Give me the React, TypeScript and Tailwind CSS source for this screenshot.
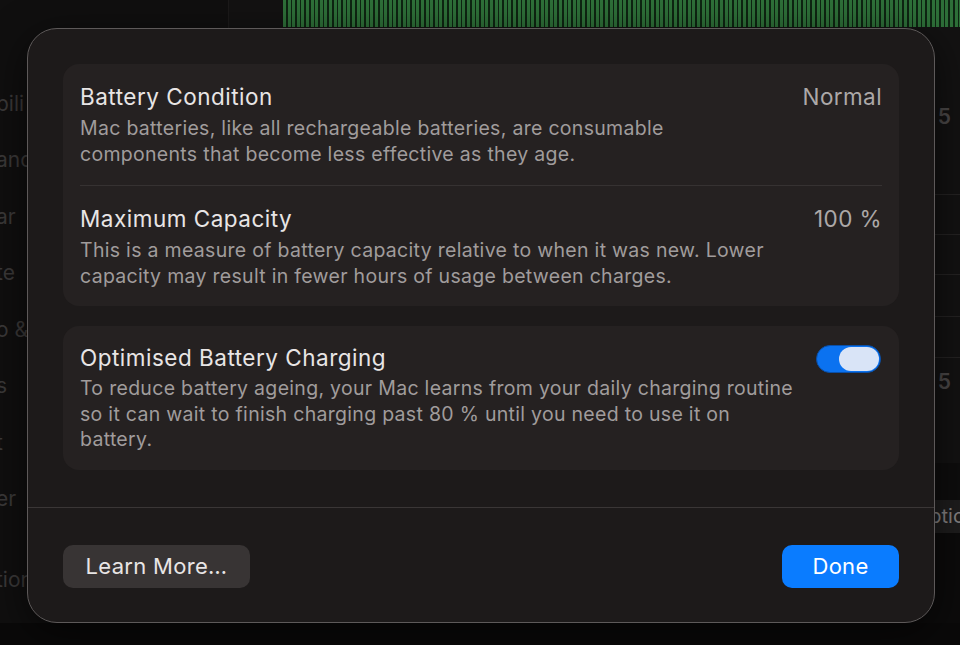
const sidebarItems = ["bili", "and", "ar", "te", "o &", "s", "t", "er", "tion"];

const Toggle = ({ on }: { on: boolean }) => (
  <div
    className={
      on
        ? "flex h-[28px] w-[65px] shrink-0 items-center justify-end rounded-full border border-[#0a4fa8] bg-[#0b72f0] px-[1px]"
        : "flex h-[28px] w-[65px] shrink-0 items-center justify-start rounded-full border border-[#3a3636] bg-[#302c2c] px-[1px]"
    }
  >
    <div className="h-[24px] w-[40px] rounded-full bg-[#d9e4f7]" />
  </div>
);

const Row = ({
  title,
  body,
  value,
  className,
}: {
  title: string;
  body: string[];
  value?: string;
  className?: string;
}) => (
  <div className={"flex items-start justify-between gap-4 " + (className ?? "")}>
    <div className="flex flex-col">
      <div className="text-[22.5px] leading-[26px] tracking-[0.5px] text-[#e8e5e5]">{title}</div>
      <div className="mt-[5px] text-[19.5px] leading-[26px] tracking-[0.3px] text-[#a09c9c]">
        {body.map((line) => (
          <div key={line} className="whitespace-nowrap">
            {line}
          </div>
        ))}
      </div>
    </div>
    {value && (
      <div className="text-[22.5px] leading-[26px] tracking-[0.4px] text-[#aca8a8]">{value}</div>
    )}
  </div>
);

export default function App() {
  return (
    <div className="relative h-[645px] w-[960px] overflow-hidden bg-[#0a0909] font-['Inter','Liberation_Sans',sans-serif]">
      {/* window behind the sheet */}
      <div className="flex h-[623px]">
        <aside className="flex w-[229px] shrink-0 flex-col border-r border-[#1c1a1a] bg-[#100f0f] pt-[91px]">
          {sidebarItems.map((item, i) => (
            <div
              key={item}
              className={
                "-ml-[4px] h-[58px] whitespace-nowrap text-[21px] leading-[26px] text-[#3b3939] " +
                (i === 7 ? "mb-[24px]" : "")
              }
            >
              {item}
            </div>
          ))}
        </aside>
        <main className="flex min-w-0 flex-1 flex-col">
          <div className="flex h-[27px]">
            <div className="w-[54px] bg-[#131212]" />
            <div className="flex-1 bg-[repeating-linear-gradient(90deg,#2e7039_0px,#2e7039_3px,#0e2412_3px,#0e2412_4.6px)]" />
          </div>
          <div className="flex flex-1 flex-col bg-[#131212] text-right">
            <div className="h-[168px] border-b border-[#242222] pr-[9px] pt-[78px] text-[21px] font-semibold leading-[24px] text-[#4a4747]">
              5
            </div>
            <div className="h-[40px] border-b border-[#242222]" />
            <div className="h-[40px] border-b border-[#242222]" />
            <div className="h-[42px] border-b border-[#242222]" />
            <div className="h-[41px] border-b border-[#242222]" />
            <div className="h-[105px] pr-[9px] pt-[12px] text-[21px] font-semibold leading-[24px] text-[#4a4747]">
              5
            </div>
            <div className="h-[37px] bg-[#0e0d0d]" />
            <div className="h-[33px] overflow-hidden whitespace-nowrap bg-[#1e1d1d] pl-[685px] text-left text-[20px] leading-[33px] text-[#858282]">
              Options…
            </div>
            <div className="flex-1 bg-[#0c0b0b]" />
          </div>
        </main>
      </div>

      {/* battery health sheet */}
      <div className="absolute left-[27px] top-[28px] flex h-[595px] w-[908px] flex-col rounded-[30px] border border-[#5d5959] bg-[#1d1a1a] shadow-[0_10px_40px_rgba(0,0,0,0.6)]">
        <div className="flex flex-col gap-[20px] px-[35px] pb-[37px] pt-[35px]">
          <div className="rounded-[16px] bg-[#252121] px-[17px]">
            <Row
              className="pb-[18px] pt-[20px]"
              title="Battery Condition"
              value="Normal"
              body={[
                "Mac batteries, like all rechargeable batteries, are consumable",
                "components that become less effective as they age.",
              ]}
            />
            <div className="h-px bg-[#363232]" />
            <Row
              className="pb-[17px] pt-[20px]"
              title="Maximum Capacity"
              value="100 %"
              body={[
                "This is a measure of battery capacity relative to when it was new. Lower",
                "capacity may result in fewer hours of usage between charges.",
              ]}
            />
          </div>
          <div className="flex items-start justify-between rounded-[16px] bg-[#252121] pb-[17px] pl-[17px] pr-[18px] pt-[19px]">
            <div className="flex flex-col">
              <div className="text-[22.5px] leading-[26px] tracking-[0.5px] text-[#e8e5e5]">
                Optimised Battery Charging
              </div>
              <div className="mt-[5px] whitespace-nowrap text-[19.5px] leading-[25.5px] tracking-[0.3px] text-[#a09c9c]">
                <div>To reduce battery ageing, your Mac learns from your daily charging routine</div>
                <div>so it can wait to finish charging past 80 % until you need to use it on</div>
                <div>battery.</div>
              </div>
            </div>
            <Toggle on={true} />
          </div>
        </div>
        <div className="h-px bg-[#3a3636]" />
        <div className="flex flex-1 items-start justify-between px-[35px] pt-[37px]">
          <button className="h-[43px] w-[187px] rounded-[10px] bg-[#383434] text-[22px] tracking-[0.3px] text-[#e8e5e5]">
            Learn More…
          </button>
          <button className="h-[43px] w-[117px] rounded-[10px] bg-[#0a7cff] text-[22px] tracking-[0.3px] text-white">
            Done
          </button>
        </div>
      </div>
    </div>
  );
}
